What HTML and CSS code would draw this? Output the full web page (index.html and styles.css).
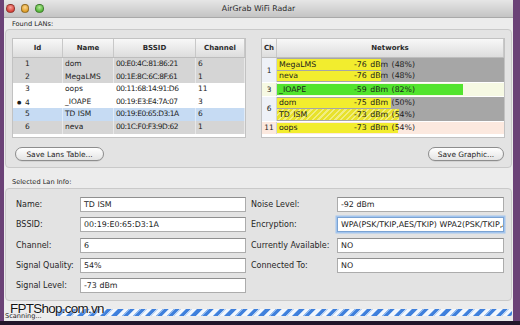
FILE: index.html
```html
<!DOCTYPE html>
<html lang="en">
<head>
  <meta charset="UTF-8">
  <meta name="viewport" content="width=device-width, initial-scale=1.0">
  <title>AirGrab WiFi Radar</title>
  <link rel="stylesheet" href="styles.css">
</head>
<body>
  <div class="desktop">
    <div class="window">
      <div class="titlebar">
        <div class="lights">
          <span class="light red"></span>
          <span class="light yellow"></span>
          <span class="light green"></span>
        </div>
        <div class="title">AirGrab WiFi Radar</div>
      </div>

      <div class="section-label">Found LANs:</div>
      <div class="group lans">
        <div class="tables">
          <!-- LAN list -->
          <div class="table lan-table">
            <div class="lan-row thead">
              <div class="th">Id</div>
              <div class="th">Name</div>
              <div class="th">BSSID</div>
              <div class="th">Channel</div>
            </div>
            <div class="lan-row gray">
              <div class="td id"><span class="mark"></span>1</div>
              <div class="td">dom</div>
              <div class="td mac">00:E0:4C:81:86:21</div>
              <div class="td">6</div>
            </div>
            <div class="lan-row gray">
              <div class="td id"><span class="mark"></span>2</div>
              <div class="td">MegaLMS</div>
              <div class="td mac">00:1E:8C:6C:8F:61</div>
              <div class="td">1</div>
            </div>
            <div class="lan-row">
              <div class="td id"><span class="mark"></span>3</div>
              <div class="td">oops</div>
              <div class="td mac">00:11:68:14:91:D6</div>
              <div class="td">11</div>
            </div>
            <div class="lan-row">
              <div class="td id"><span class="mark">&#9679;</span>4</div>
              <div class="td">_IOAPE</div>
              <div class="td mac">00:19:E3:E4:7A:07</div>
              <div class="td">3</div>
            </div>
            <div class="lan-row selected">
              <div class="td id"><span class="mark"></span>5</div>
              <div class="td">TD ISM</div>
              <div class="td mac">00:19:E0:65:D3:1A</div>
              <div class="td">6</div>
            </div>
            <div class="lan-row gray">
              <div class="td id"><span class="mark"></span>6</div>
              <div class="td">neva</div>
              <div class="td mac">00:1C:F0:F3:9D:62</div>
              <div class="td">1</div>
            </div>
          </div>

          <!-- channel graphic -->
          <div class="table net-table">
            <div class="net-head thead">
              <div class="th">Ch</div>
              <div class="th">Networks</div>
            </div>
            <div class="ngroup busy">
              <div class="ch">1</div>
              <div class="nets">
                <div class="net" style="--w:104px"><span class="nname">MegaLMS</span><span>-76 dBm (48%)</span></div>
                <div class="net" style="--w:104px"><span class="nname">neva</span><span>-76 dBm (48%)</span></div>
              </div>
            </div>
            <div class="ngroup clear">
              <div class="ch">3</div>
              <div class="nets">
                <div class="net strong" style="--w:186px"><span class="nname">_IOAPE</span><span>-59 dBm (82%)</span></div>
              </div>
            </div>
            <div class="ngroup busy">
              <div class="ch">6</div>
              <div class="nets">
                <div class="net" style="--w:114px"><span class="nname">dom</span><span>-75 dBm (50%)</span></div>
                <div class="net picked" style="--w:122px"><span class="nname">TD ISM</span><span>-73 dBm (54%)</span></div>
              </div>
            </div>
            <div class="ngroup warm">
              <div class="ch">11</div>
              <div class="nets">
                <div class="net" style="--w:121px"><span class="nname">oops</span><span>-73 dBm (54%)</span></div>
              </div>
            </div>
          </div>
        </div>

        <div class="buttons">
          <button class="btn btn-lans">Save Lans Table...</button>
          <button class="btn btn-graphic">Save Graphic...</button>
        </div>
      </div>

      <div class="section-label second">Selected Lan Info:</div>
      <div class="group info">
        <div class="form">
          <div class="label">Name:</div>
          <div class="field">TD ISM</div>
          <div class="label right">Noise Level:</div>
          <div class="field">-92 dBm</div>

          <div class="label">BSSID:</div>
          <div class="field">00:19:E0:65:D3:1A</div>
          <div class="label right">Encryption:</div>
          <div class="field focus">WPA(PSK/TKIP,AES/TKIP) WPA2(PSK/TKIP,AES/TKIP)</div>

          <div class="label">Channel:</div>
          <div class="field">6</div>
          <div class="label right">Currently Available:</div>
          <div class="field">NO</div>

          <div class="label">Signal Quality:</div>
          <div class="field">54%</div>
          <div class="label right">Connected To:</div>
          <div class="field">NO</div>

          <div class="label">Signal Level:</div>
          <div class="field">-73 dBm</div>
        </div>
      </div>

      <div class="statusbar">
        <div class="status-text">Scanning...</div>
        <div class="progress"></div>
      </div>
    </div>

    <div class="watermark">FPTShop.com.vn</div>
  </div>
</body>
</html>
```

FILE: styles.css
```css
/* Reset styles */
* {
  margin: 0;
  padding: 0;
  box-sizing: border-box;
}

body {
  font-family: "DejaVu Sans", Verdana, sans-serif;
  color: #1c1c1c;
  background-color: #6b4277;
  height: 325px;
  overflow: hidden;
}

.desktop {
  position: relative;
  height: 325px;
  padding-left: 4px;
  background: linear-gradient(to bottom, #6b4277 0, #6b4277 321px, #22162a 321px);
}

.window {
  width: 509px;
  height: 321px;
  background-color: #ececec;
  display: flex;
  flex-direction: column;
}

/* Title bar */
.titlebar {
  height: 18px;
  flex: 0 0 18px;
  display: grid;
  grid-template-columns: 1fr auto 1fr;
  align-items: center;
  background: linear-gradient(#e6e6e6, #c4c4c4);
  border-bottom: 1px solid #a9a9a9;
}

.lights {
  display: flex;
  gap: 6px;
  padding-left: 2px;
}

.light {
  width: 8.5px;
  height: 8.5px;
  border-radius: 50%;
  border: 0.5px solid rgba(0, 0, 0, 0.35);
}

.light.red {
  background: radial-gradient(circle at 50% 35%, #f7a29a, #d8433a 70%);
}

.light.yellow {
  background: radial-gradient(circle at 50% 35%, #fbd58e, #e1a12c 70%);
}

.light.green {
  background: radial-gradient(circle at 50% 35%, #b6ea9a, #55b63a 70%);
}

.title {
  font-size: 7.8px;
  color: #2a2a2a;
}

/* Group boxes */
.section-label {
  height: 11px;
  flex: 0 0 11px;
  padding: 2px 0 0 8px;
  font-size: 6.6px;
  line-height: 9px;
}

.section-label.second {
  height: 20px;
  flex: 0 0 20px;
  padding-top: 10px;
}

.group {
  margin: 0 1px;
  border: 1px solid #c9c9c9;
  border-radius: 4px;
  background-color: #e3e3e3;
}

.group.lans {
  height: 139px;
  flex: 0 0 139px;
  padding: 8px 6px 0;
}

.group.info {
  height: 113px;
  flex: 0 0 113px;
  padding: 8px 0 0 10px;
}

.tables {
  display: flex;
  gap: 15px;
  height: 100px;
}

.table {
  background-color: #fff;
  border: 1px solid #c2c2c2;
}

.thead {
  background: linear-gradient(#f8f8f8, #dddddd);
  border-bottom: 1px solid #bdbdbd;
}

.th {
  display: flex;
  align-items: center;
  justify-content: center;
  font-size: 7px;
  font-weight: bold;
  color: #2a2a2a;
  border-right: 1px solid #c8c8c8;
}

/* LAN table */
.lan-table {
  width: 235px;
}

.lan-row {
  display: grid;
  grid-template-columns: 50px 51px 82px 1fr;
  height: 12.6px;
}

.lan-row.thead {
  height: 19px;
}

.lan-row.gray {
  background-color: #d5d5d5;
}

.lan-row.selected {
  background-color: #c6dbf3;
}

.td {
  font-size: 7.5px;
  line-height: 12.6px;
  padding-left: 2px;
  white-space: nowrap;
  overflow: hidden;
  border-right: 1px solid rgba(255, 255, 255, 0.45);
}

.td.id {
  padding-left: 4px;
}

.mark {
  display: inline-block;
  width: 8px;
  font-size: 5px;
  vertical-align: 1px;
}

.td.mac {
  letter-spacing: -0.5px;
}

/* Channel graphic */
.net-table {
  width: 245px;
}

.net-head {
  display: grid;
  grid-template-columns: 15px 1fr;
  height: 19px;
}

.ngroup {
  display: flex;
  margin-bottom: 1px;
}

.ch {
  width: 15px;
  flex: 0 0 15px;
  display: flex;
  align-items: center;
  justify-content: center;
  font-size: 7.4px;
  background-color: #eef1f7;
  border-right: 1px solid #d0d3da;
}

.nets {
  flex: 1;
  display: flex;
  flex-direction: column;
  gap: 1px;
  padding: 1px 0;
}

.ngroup.busy .nets {
  background-color: #a6a6a6;
}

.ngroup.clear .ch,
.ngroup.clear .nets {
  background-color: #f6f9e3;
}

.ngroup.warm .ch,
.ngroup.warm .nets {
  background-color: #fce9df;
}

.net {
  height: 10.5px;
  display: flex;
  align-items: center;
  padding-left: 2px;
  font-size: 7.8px;
  word-spacing: 1px;
  white-space: nowrap;
  background: linear-gradient(#f2ed2e, #f2ed2e) no-repeat;
  background-size: var(--w) 100%;
}

.net.strong {
  background-image: linear-gradient(#52e42e, #52e42e);
}

.net.picked {
  background-image:
    repeating-linear-gradient(135deg, rgba(255, 255, 255, 0.4) 0 1.5px, transparent 1.5px 4px),
    linear-gradient(#e8e22c, #e8e22c);
  background-size: var(--w) 100%, var(--w) 100%;
}

.nname {
  width: 75px;
  flex: 0 0 75px;
}

/* Buttons */
.buttons {
  display: flex;
  justify-content: space-between;
  margin-top: 9px;
  padding: 0 1px 0 3px;
}

.btn {
  height: 14px;
  font-family: inherit;
  font-size: 7.4px;
  color: #1c1c1c;
  border: 1px solid #8d8d8d;
  border-radius: 7px;
  background: linear-gradient(#ffffff, #e4e4e4);
  box-shadow: 0 0.5px 0.5px rgba(0, 0, 0, 0.15);
}

.btn-lans {
  width: 89px;
}

.btn-graphic {
  width: 76px;
}

/* Selected LAN form */
.form {
  display: grid;
  grid-template-columns: 64px 166px 91px 167px;
  grid-auto-rows: 15px;
  row-gap: 5.3px;
}

.label {
  display: flex;
  align-items: center;
  font-size: 8px;
  color: #262626;
  white-space: nowrap;
}

.label.right {
  padding-left: 5px;
}

.field {
  background-color: #fff;
  border: 1px solid #acacac;
  border-top-color: #8f8f8f;
  font-size: 7.9px;
  line-height: 13px;
  padding-left: 3px;
  white-space: nowrap;
  overflow: hidden;
}

.field.focus {
  border-color: #7ba3d3;
  box-shadow: 0 0 0 1.5px #a3c5ee;
}

/* Status bar */
.statusbar {
  flex: 1;
  display: flex;
  align-items: flex-start;
}

.status-text {
  width: 52px;
  flex: 0 0 52px;
  padding: 11px 0 0 1px;
  font-size: 6.6px;
  line-height: 8px;
}

.progress {
  flex: 1;
  height: 7px;
  margin: 8px 1px 0 0;
  border-radius: 2px;
  background: repeating-linear-gradient(-45deg, #3f80dc 0 3px, #8fb8ee 3px 4px, #f2f7fd 4px 7px, #bcd4f3 7px 8px);
}

/* Site watermark laid over the corner */
.watermark {
  position: absolute;
  left: 10px;
  top: 301px;
  font-family: "Liberation Sans", Arial, sans-serif;
  font-size: 13.4px;
  letter-spacing: -0.7px;
  color: #141414;
  text-shadow: 0 0 2px #fff, 0 0 1px #fff;
}
```
